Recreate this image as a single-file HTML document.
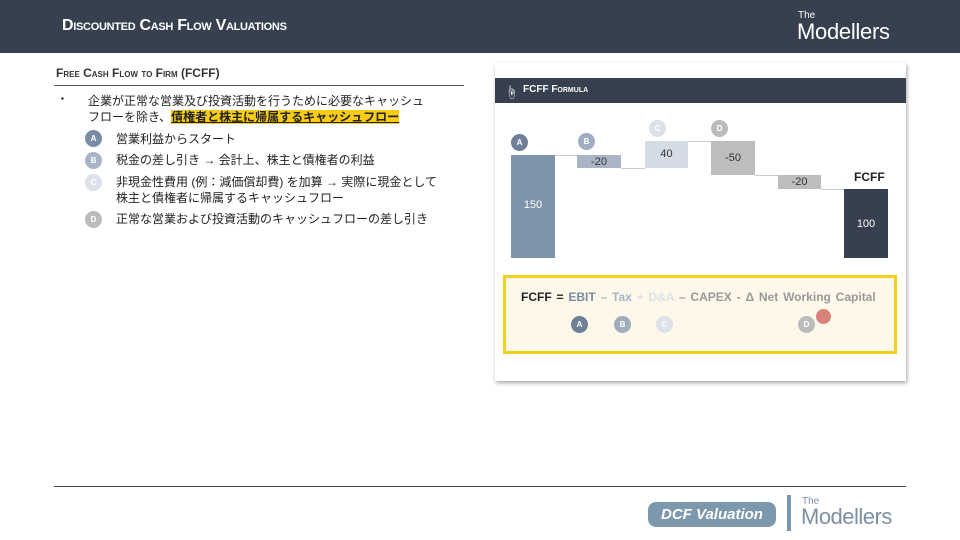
<!DOCTYPE html>
<html><head><meta charset="utf-8"><style>
body{margin:0;width:960px;height:540px;background:#fff;position:relative;overflow:hidden;font-family:"Liberation Sans","Noto Sans CJK JP",sans-serif}
.a{position:absolute}
.hdr{left:0;top:0;width:960px;height:53px;background:#36404f}
.sc{font-variant:small-caps;font-weight:bold}
.c{position:absolute;width:17px;height:17px;border-radius:50%;color:#fff;font-size:8px;font-weight:bold;text-align:center;line-height:17px}
.t{font-size:12px;color:#222;white-space:nowrap}
.bar{position:absolute;font-size:11px;color:#333;text-align:center}
.ln{position:absolute;height:1px;background:#ccc}
</style></head><body>
<div class="a hdr"></div>
<div class="a sc" style="left:62px;top:17px;color:#fff;font-size:16px;letter-spacing:-0.3px">Discounted Cash Flow Valuations</div>
<div class="a" style="left:798px;top:10px;color:#fff;font-size:10px">The</div>
<div class="a" style="left:797px;top:19px;color:#fff;font-size:22px;letter-spacing:-0.3px">Modellers</div>

<div class="a sc" style="left:56px;top:66px;font-size:12px;color:#333">Free Cash Flow to Firm (FCFF)</div>
<div class="a" style="left:54px;top:85px;width:410px;height:1px;background:#555"></div>
<div class="a" style="left:61px;top:94px;font-size:8px">▪</div>
<div class="a t" style="left:88px;top:92px">企業が正常な営業及び投資活動を行うために必要なキャッシュ</div>
<div class="a t" style="left:88px;top:108px">フローを除き、<span style="background:#f8cc16;font-weight:bold;text-decoration:underline">債権者と株主に帰属するキャッシュフロー</span></div>
<div class="c" style="left:85px;top:130px;background:#7a8ca5">A</div>
<div class="a t" style="left:116px;top:130px">営業利益からスタート</div>
<div class="c" style="left:85px;top:152px;background:#a8b4c6">B</div>
<div class="a t" style="left:116px;top:151px">税金の差し引き <b>→</b> 会計上、株主と債権者の利益</div>
<div class="c" style="left:85px;top:174px;background:#dde2ea">C</div>
<div class="a t" style="left:116px;top:173px">非現金性費用 (例：減価償却費) を加算 <b>→</b> 実際に現金として</div>
<div class="a t" style="left:116px;top:189px">株主と債権者に帰属するキャッシュフロー</div>
<div class="c" style="left:85px;top:211px;background:#bbb">D</div>
<div class="a t" style="left:116px;top:210px">正常な営業および投資活動のキャッシュフローの差し引き</div>

<div class="a" style="left:495px;top:63px;width:411px;height:318px;background:#fff;box-shadow:1px 2px 4px rgba(0,0,0,.35)"></div>
<div class="a" style="left:495px;top:78px;width:411px;height:25px;background:#36404f"></div>
<div class="a" style="left:505px;top:82px;color:#fff;font-size:13px">☝</div>
<div class="a sc" style="left:523px;top:84px;color:#fff;font-size:10px">FCFF Formula</div>

<div class="c" style="left:511px;top:134px;background:#6e7f98">A</div>
<div class="c" style="left:578px;top:133px;background:#a0adbf">B</div>
<div class="c" style="left:649px;top:120px;background:#dde2ea">C</div>
<div class="c" style="left:711px;top:120px;background:#bbb">D</div>
<div class="ln" style="left:555px;top:155px;width:22px"></div>
<div class="ln" style="left:621px;top:168px;width:24px"></div>
<div class="ln" style="left:688px;top:141px;width:23px"></div>
<div class="ln" style="left:755px;top:175px;width:23px"></div>
<div class="ln" style="left:821px;top:189px;width:23px"></div>
<div class="bar" style="left:511px;top:155px;width:44px;height:103px;background:#7f93aa;color:#fff;line-height:100px">150</div>
<div class="bar" style="left:577px;top:155px;width:44px;height:13px;background:#a9b5c5;line-height:14px">-20</div>
<div class="bar" style="left:645px;top:141px;width:43px;height:27px;background:#d5dbe4;line-height:26px">40</div>
<div class="bar" style="left:711px;top:141px;width:44px;height:34px;background:#bdbdbd;line-height:34px">-50</div>
<div class="bar" style="left:778px;top:175px;width:43px;height:14px;background:#bdbdbd;line-height:15px">-20</div>
<div class="a" style="left:854px;top:170px;font-size:12px;font-weight:bold;color:#222">FCFF</div>
<div class="bar" style="left:844px;top:189px;width:44px;height:69px;background:#36404f;color:#fff;line-height:70px">100</div>

<div class="a" style="left:503px;top:275px;width:388px;height:73px;border:3px solid #f2d01e;background:#fdf8e9"></div>
<div class="a" style="left:521px;top:290px;font-size:12px;font-weight:bold;white-space:nowrap;color:#999;word-spacing:1.5px"><span style="color:#222">FCFF</span> <span style="color:#222">=</span> <span style="color:#7a8ca5">EBIT</span> <span style="color:#a8b4c6">– Tax</span> <span style="color:#dde2ea">+ D&amp;A</span> – CAPEX - Δ Net Working Capital</div>
<div class="c" style="left:571px;top:316px;background:#6e7f98">A</div>
<div class="c" style="left:614px;top:316px;background:#a0adbf">B</div>
<div class="c" style="left:656px;top:316px;background:#dde2ea">C</div>
<div class="c" style="left:798px;top:316px;background:#bbb">D</div>
<div class="a" style="left:816px;top:309px;width:15px;height:15px;border-radius:50%;background:#d9827b"></div>

<div class="a" style="left:54px;top:486px;width:852px;height:1px;background:#444"></div>
<div class="a" style="left:648px;top:502px;width:128px;height:25px;border-radius:8px;background:#7d97ad;color:#fff;font-size:15px;font-weight:bold;font-style:italic;text-align:center;line-height:25px">DCF Valuation</div>
<div class="a" style="left:787px;top:495px;width:4px;height:36px;background:#7d97ad"></div>
<div class="a" style="left:802px;top:496px;color:#7d8fa5;font-size:10px">The</div>
<div class="a" style="left:801px;top:504px;color:#7d8fa5;font-size:22px;letter-spacing:-0.5px">Modellers</div>
</body></html>
